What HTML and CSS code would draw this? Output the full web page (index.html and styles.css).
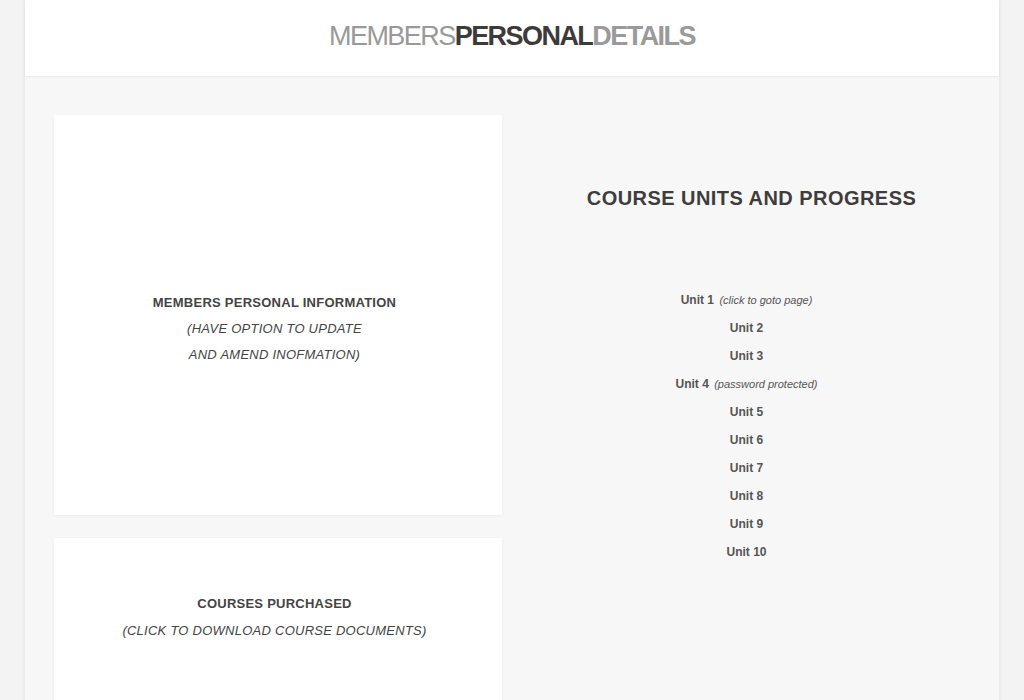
FILE: index.html
```html
<!DOCTYPE html>
<html lang="en">
<head>
<meta charset="utf-8">
<title>Members Personal Details</title>
<link rel="stylesheet" href="styles.css">
</head>
<body>
<div class="page">
  <header class="masthead">
    <h1 class="title"><span class="t-light">MEMBERS</span><span class="t-dark">PERSONAL</span><span class="t-grey">DETAILS</span></h1>
  </header>
  <main class="content">
    <div class="left-col">
      <section class="card card-info">
        <h2 class="card-title">MEMBERS PERSONAL INFORMATION</h2>
        <p class="card-note">(HAVE OPTION TO UPDATE<br>AND AMEND INOFMATION)</p>
      </section>
      <section class="card card-courses">
        <h2 class="card-title">COURSES PURCHASED</h2>
        <p class="card-note">(CLICK TO DOWNLOAD COURSE DOCUMENTS)</p>
      </section>
    </div>
    <div class="right-col">
      <h2 class="units-heading">COURSE UNITS AND PROGRESS</h2>
      <ul class="units">
        <li><b>Unit 1</b> <i>(click to goto page)</i></li>
        <li><b>Unit 2</b></li>
        <li><b>Unit 3</b></li>
        <li><b>Unit 4</b> <i>(password protected)</i></li>
        <li><b>Unit 5</b></li>
        <li><b>Unit 6</b></li>
        <li><b>Unit 7</b></li>
        <li><b>Unit 8</b></li>
        <li><b>Unit 9</b></li>
        <li><b>Unit 10</b></li>
      </ul>
    </div>
  </main>
</div>
</body>
</html>
```

FILE: styles.css
```css
html, body {
  margin: 0;
  padding: 0;
  height: 100%;
}

body {
  background: #f3f3f3;
  font-family: "Liberation Sans", Arial, sans-serif;
  color: #444;
  overflow: hidden;
}

.page {
  margin: 0 25px;
  min-height: 100%;
  background: #f7f7f7;
  box-shadow: 0 0 5px rgba(0, 0, 0, 0.08);
}

.masthead {
  height: 76px;
  background: #fff;
  box-shadow: 0 1px 2px rgba(0, 0, 0, 0.06);
  display: flex;
  align-items: center;
  justify-content: center;
  position: relative;
  z-index: 1;
}

.title {
  margin: 0;
  font-size: 27px;
  line-height: 1;
  letter-spacing: -1.55px;
  padding-bottom: 3px;
}

.t-light {
  font-weight: normal;
  color: #999;
}

.t-dark {
  font-weight: bold;
  color: #3d3a39;
}

.t-grey {
  font-weight: bold;
  color: #9a9a9a;
}

.content {
  display: flex;
  padding: 39px 0 0 29px;
}

.left-col {
  width: 448px;
  flex: none;
  display: flex;
  flex-direction: column;
  gap: 23px;
}

.card {
  background: #fff;
  box-shadow: 0 1px 3px rgba(0, 0, 0, 0.05);
  text-align: center;
  padding-right: 7px;
  box-sizing: border-box;
}

.card-info {
  height: 400px;
  padding-top: 175px;
}

.card-courses {
  height: 200px;
  padding-top: 53px;
}

.card-title {
  margin: 0;
  font-size: 13px;
  font-weight: bold;
  letter-spacing: 0.25px;
  line-height: 26px;
  color: #444;
}

.card-note {
  margin: 0;
  font-size: 13px;
  font-style: italic;
  letter-spacing: 0.25px;
  line-height: 26px;
  color: #444;
}

.card-courses .card-note {
  line-height: 27px;
}

.right-col {
  flex: 1;
  text-align: center;
  padding-top: 69px;
}

.units-heading {
  margin: 0;
  font-size: 20px;
  font-weight: bold;
  letter-spacing: 0.45px;
  line-height: 28px;
  color: #3f3d3c;
  padding-left: 2px;
}

.units {
  list-style: none;
  margin: 74px 0 0;
  padding: 0;
}

.units li {
  font-size: 12px;
  line-height: 28px;
  color: #555;
  padding-right: 8px;
}

.units b {
  font-weight: bold;
}

.units i {
  font-size: 11px;
  color: #555;
  padding-left: 2px;
}
```
